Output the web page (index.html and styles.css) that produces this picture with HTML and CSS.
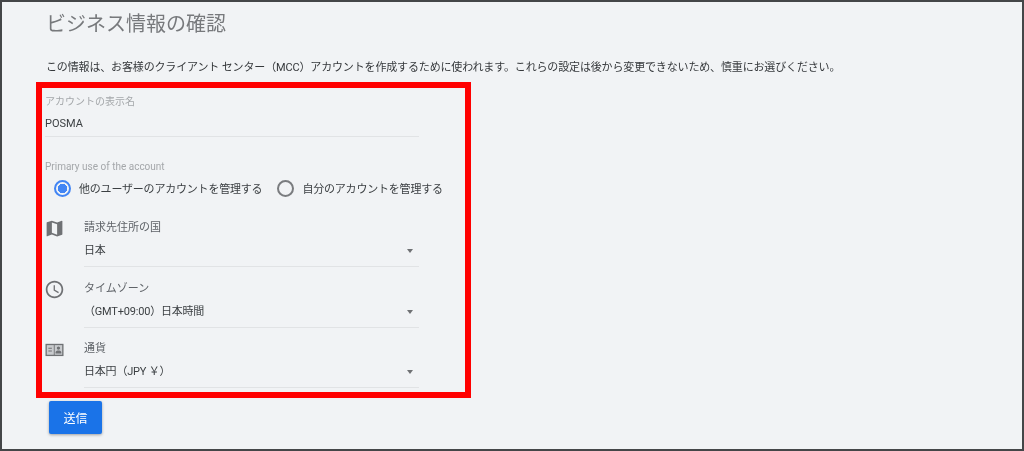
FILE: index.html
```html
<!DOCTYPE html>
<html lang="ja">
<head>
    <meta charset="UTF-8">
    <meta name="viewport" content="width=device-width, initial-scale=1.0">
    <title>ビジネス情報の確認</title>
    <link rel="stylesheet" href="styles.css">
</head>
<body>
    <div class="frame">
        <h1 class="page-title">ビジネス情報の確認</h1>
        <p class="intro">この情報は、お客様のクライアント センター（MCC）アカウントを作成するために使われます。これらの設定は後から変更できないため、慎重にお選びください。</p>

        <div class="highlight">
            <div class="name-field">
                <div class="small-label">アカウントの表示名</div>
                <div class="name-value">POSMA</div>
            </div>

            <div class="small-label usage-label">Primary use of the account</div>
            <div class="radio-group">
                <span class="radio radio-checked"></span>
                <span class="radio-text">他のユーザーのアカウントを管理する</span>
                <span class="radio"></span>
                <span class="radio-text">自分のアカウントを管理する</span>
            </div>

            <div class="select-list">
                <div class="select-row">
                    <svg class="row-icon" viewBox="0 0 24 24"><path d="M20.5 3l-.16.03L15 5.1 9 3 3.36 4.9c-.21.07-.36.25-.36.48V20.5c0 .28.22.5.5.5l.16-.03L9 18.9l6 2.1 5.64-1.9c.21-.07.36-.25.36-.48V3.5c0-.28-.22-.5-.5-.5zM15 19l-6-2.11V5l6 2.11V19z"/></svg>
                    <div class="select-field">
                        <div class="select-label">請求先住所の国</div>
                        <div class="select-value">日本<span class="arrow"></span></div>
                    </div>
                </div>

                <div class="select-row">
                    <svg class="row-icon" viewBox="0 0 24 24"><path d="M11.99 2C6.47 2 2 6.48 2 12s4.47 10 9.99 10C17.52 22 22 17.52 22 12S17.52 2 11.99 2zM12 20c-4.42 0-8-3.58-8-8s3.58-8 8-8 8 3.58 8 8-3.58 8-8 8zm.5-13H11v6l5.25 3.15.75-1.23-4.5-2.67z"/></svg>
                    <div class="select-field">
                        <div class="select-label">タイムゾーン</div>
                        <div class="select-value">（GMT+09:00）日本時間<span class="arrow"></span></div>
                    </div>
                </div>

                <div class="select-row">
                    <svg class="row-icon" viewBox="0 0 24 24">
                        <rect x="1.700" y="5.500" width="20.600" height="14"/>
                        <rect class="icon-panel" x="3.200" y="7" width="8" height="11"/>
                        <rect class="icon-panel" x="12.200" y="7" width="8.600" height="11"/>
                        <path d="M5 10h4v1.200H5zM5 13h4v1.200H5zM13.200 16.500h6.600v-1.300c0-1.400-1.800-2-3.300-2s-3.300.6-3.300 2zM16.500 12.300a1.900 1.900 0 1 0 0-3.800 1.900 1.900 0 0 0 0 3.800z"/>
                    </svg>
                    <div class="select-field">
                        <div class="select-label">通貨</div>
                        <div class="select-value">日本円（JPY ￥）<span class="arrow"></span></div>
                    </div>
                </div>
            </div>
        </div>

        <button class="submit">送信</button>
    </div>
</body>
</html>
```

FILE: styles.css
```css
:root {
    --bg-color: #f1f3f5;
    --text-color: #3c4043;
    --text-muted: #5f6368;
    --label-color: #a4a7aa;
    --line-color: #e1e3e5;
    --blue: #1a73e8;
    --red: #ff0000;
}

* {
    box-sizing: border-box;
}

body {
    font-family: Roboto, "Noto Sans CJK JP", sans-serif;
    margin: 0;
    background-color: #ffffff;
    color: var(--text-color);
}

.frame {
    width: 1024px;
    height: 451px;
    padding: 10px 0 0 34px;
    background-color: var(--bg-color);
    border: 2px solid #444648;
    overflow: hidden;
    filter: blur(0.35px);
}

.page-title {
    margin: 0 0 0 10px;
    height: 24px;
    font-size: 20px;
    line-height: 24px;
    font-weight: 400;
    color: #77797c;
}

.intro {
    margin: 24px 0 0 10px;
    height: 16px;
    font-size: 11px;
    line-height: 16px;
    letter-spacing: -0.15px;
    white-space: nowrap;
    color: #35383b;
}

.highlight {
    width: 435px;
    height: 316px;
    margin-top: 6px;
    padding: 7px 0 0 3px;
    border: 6px solid var(--red);
}

.small-label {
    font-size: 10px;
    line-height: 14px;
    color: var(--label-color);
}

.name-field {
    width: 374px;
    height: 42px;
    border-bottom: 1px solid var(--line-color);
}

.name-value {
    margin-top: 7px;
    font-size: 11px;
    line-height: 16px;
    color: var(--text-color);
}

.usage-label {
    margin-top: 23px;
}

.radio-group {
    display: flex;
    align-items: center;
    height: 18px;
    margin: 5px 0 0 9px;
    font-size: 11px;
    letter-spacing: -0.2px;
}

.radio {
    width: 17px;
    height: 17px;
    flex: none;
    border: 2px solid #7a7c7f;
    border-radius: 50%;
}

.radio-checked {
    border-color: #4285f4;
    background: radial-gradient(circle, #4285f4 0 4.500px, transparent 5px);
}

.radio-text {
    margin: 0 15px 0 8px;
    white-space: nowrap;
}

.select-list {
    margin-top: 23px;
}

.select-row {
    display: flex;
    width: 374px;
    height: 60.500px;
}

.row-icon {
    width: 21px;
    height: 21px;
    flex: none;
    margin: -2px 0 0 -1px;
    fill: #6f7174;
}

.icon-panel {
    fill: #c9cbce;
}

.select-field {
    flex: 1;
    height: 47px;
    margin-left: 19px;
    border-bottom: 1px solid var(--line-color);
}

.select-label {
    font-size: 11px;
    line-height: 16px;
    color: var(--text-muted);
}

.select-value {
    display: flex;
    align-items: center;
    justify-content: space-between;
    margin-top: 7px;
    font-size: 11px;
    line-height: 16px;
    letter-spacing: -0.2px;
    text-spacing-trim: space-all;
    color: var(--text-color);
}

.arrow {
    width: 0;
    height: 0;
    margin-right: 6px;
    border-left: 3.500px solid transparent;
    border-right: 3.500px solid transparent;
    border-top: 4px solid #6f7174;
}

.submit {
    display: block;
    width: 53px;
    height: 33px;
    margin: 3px 0 0 13px;
    padding: 0;
    border: none;
    border-radius: 2px;
    background-color: var(--blue);
    color: #ffffff;
    font-family: inherit;
    font-size: 12px;
    box-shadow: 0 1px 3px rgba(0, 0, 0, 0.35);
}
```
